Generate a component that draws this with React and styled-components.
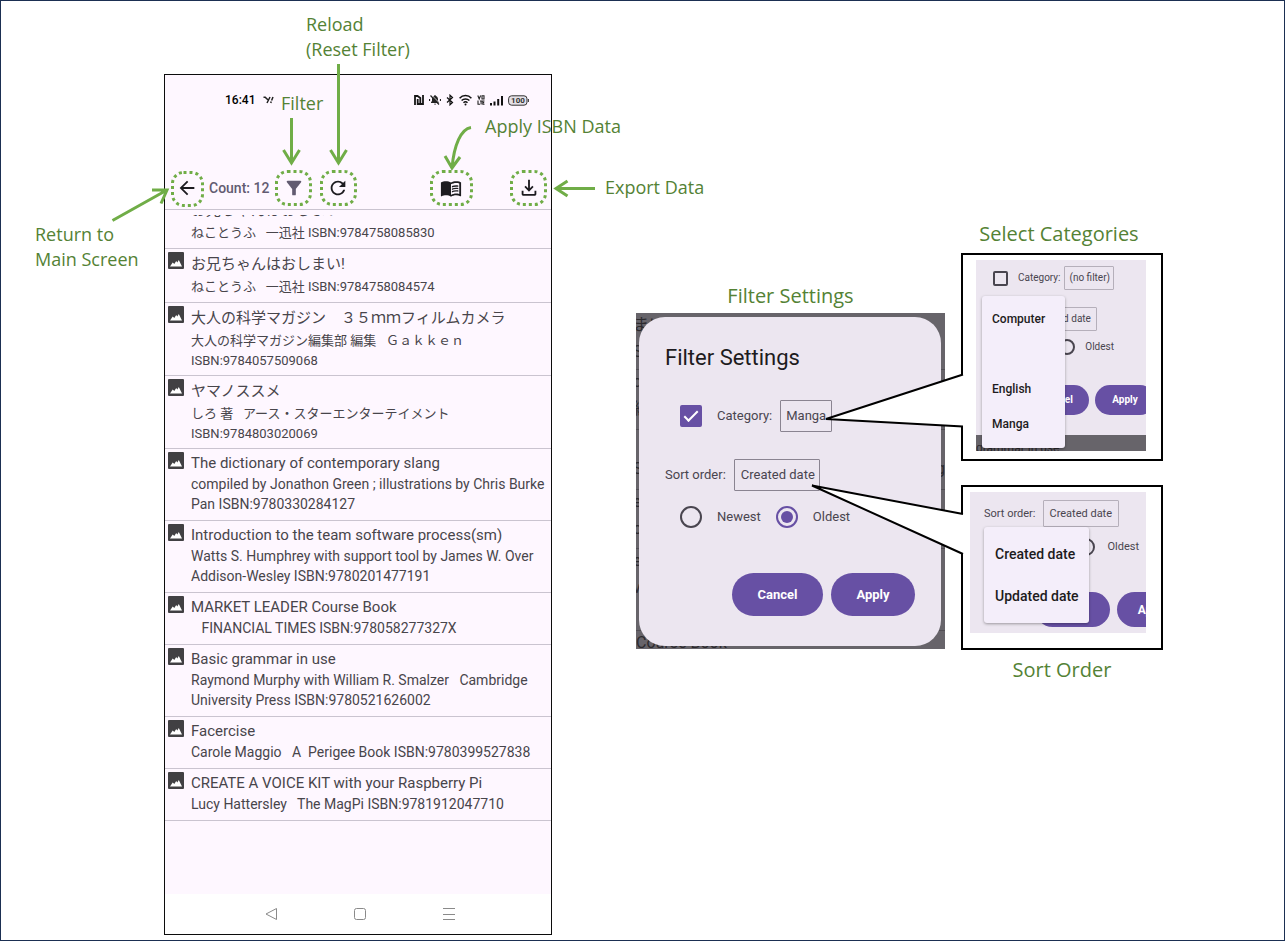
import React from "react";
import styled, { createGlobalStyle, css } from "styled-components";
import { MdArrowBack, MdFilterAlt, MdRefresh, MdMenuBook } from "react-icons/md";

const GlobalStyle = createGlobalStyle`
  *, *::before, *::after { box-sizing: border-box; }
  body { margin: 0; background: #fff; }
  button, input, select { font: inherit; margin: 0; }
  ul { list-style: none; margin: 0; padding: 0; }
`;

const sans = `Roboto, "Noto Sans CJK JP", sans-serif`;

const Page = styled.main`
  position: relative;
  display: flex;
  align-items: flex-start;
  min-height: 100vh;
  padding: 73px 0 5px 163px;
  border: 1px solid #1b2f52;
  font-family: ${sans};
`;

/* ---------- phone ---------- */

const Phone = styled.section`
  flex: none;
  display: flex;
  flex-direction: column;
  width: 388px;
  min-height: 861px;
  border: 1px solid #0c0c0c;
  background: #fef7ff;
`;

const StatusBar = styled.div`
  display: flex;
  align-items: center;
  height: 50px;
  padding: 0 22px 0 60px;
  gap: 8px;
  color: #111;
  svg { display: block; }
`;

const Clock = styled.span`
  font: 500 12px/16px Roboto, sans-serif;
  color: #000;
`;

const StatusIcons = styled.div`
  display: flex;
  align-items: center;
  gap: 5px;
  margin-left: auto;
`;

const Toolbar = styled.header`
  display: flex;
  align-items: center;
  height: 43px;
  margin-top: 42px;
  padding: 0 11px;
  border-bottom: 1px solid #cac4d0;
`;

const IconButton = styled.button`
  display: flex;
  width: 22px;
  height: 22px;
  margin-left: ${(p) => p.$gap || 0}px;
  padding: 0;
  border: 0;
  background: none;
  color: ${(p) => p.$color || "#1d1b20"};
  svg { width: 22px; height: 22px; }
`;

const Count = styled.span`
  width: 60px;
  margin-left: 11px;
  font-weight: 500;
  font-size: 14px;
  line-height: 20px;
  white-space: nowrap;
  color: #625b71;
`;

const Spacer = styled.div`
  flex: 1;
`;

const BookList = styled.ul`
  flex: 1;
  margin-top: 5px;
  overflow: hidden;
`;

const Book = styled.li`
  display: flex;
  padding: 3px 3px ${(p) => p.$bottom}px;
  border-bottom: 1px solid #cac4d0;
  color: #48454b;
  &:first-child { margin-top: -20px; }
  svg { flex: none; }
`;

const BookText = styled.div`
  margin-left: 7px;
`;

const BookTitle = styled.div`
  font-size: 15px;
  line-height: ${(p) => (p.$cjk ? 24 : 22)}px;
  white-space: nowrap;
`;

const BookInfo = styled.div`
  font-size: ${(p) => (p.$cjk ? 13 : 14)}px;
  line-height: 20px;
  white-space: pre;
  ${BookTitle} + & { margin-top: ${(p) => (p.$cjk ? 1 : 0)}px; }
`;

const NavBar = styled.nav`
  display: flex;
  align-items: center;
  justify-content: space-between;
  height: 40px;
  padding: 0 94px 0 98px;
  background: #fff;
`;

const NavButton = styled.button`
  display: flex;
  padding: 0;
  border: 0;
  background: none;
  color: #8a8a8a;
`;

/* ---------- figures ---------- */

const Column = styled.div`
  flex: none;
  margin: ${(p) => p.$top}px 0 0 ${(p) => p.$left}px;
`;

const Caption = styled.h2`
  margin: ${(p) => p.$top || 0}px 0 0;
  padding-right: ${(p) => p.$shift || 0}px;
  font: 400 20px/28px "Open Sans", sans-serif;
  text-align: center;
  color: #548235;
`;

const Backdrop = styled.div`
  position: relative;
  width: 309px;
  height: 336px;
  margin-top: 3px;
  padding: 4px 4px 3px 3px;
  overflow: hidden;
  background: #67646a;
`;

const DimList = styled.div`
  position: absolute;
  inset: 0;
  color: #2c2a2e;
`;

const DimRow = styled.div`
  height: ${(p) => p.$height}px;
  border-bottom: 1px solid #514e54;
  font-size: 16px;
  line-height: 24px;
  white-space: nowrap;
`;

const DimLine = styled.div`
  display: flex;
  justify-content: space-between;
  height: 27px;
  text-indent: -3px;
`;

const Dialog = styled.form`
  position: relative;
  display: flex;
  flex-direction: column;
  height: 329px;
  padding: 26px 26px 30px;
  border-radius: 26px;
  background: #ece6f0;
`;

const DialogTitle = styled.h3`
  margin: 0 0 27px;
  font-weight: 400;
  font-size: 22px;
  line-height: 30px;
  color: #1d1b20;
`;

const Field = styled.div`
  display: flex;
  align-items: center;
  gap: ${(p) => p.$gap ?? 8}px;
  margin-top: ${(p) => p.$top || 0}px;
  padding-left: ${(p) => p.$indent || 0}px;
  font-size: ${(p) => p.$size || 13}px;
  line-height: 20px;
  white-space: nowrap;
  color: #49454f;
  ${(p) => p.$end !== undefined && css`
    justify-content: flex-end;
    padding-right: ${p.$end}px;
  `}
`;

const Choice = styled.label`
  display: flex;
  align-items: center;
  gap: ${(p) => p.$gap || 15}px;
`;

const Check = styled.input.attrs({ type: "checkbox" })`
  appearance: none;
  display: grid;
  flex: none;
  width: ${(p) => p.$size || 22}px;
  height: ${(p) => p.$size || 22}px;
  border: 2px solid #49454f;
  border-radius: 2px;
  &:checked { border-color: #6750a4; background: #6750a4; }
  &:checked::after {
    content: "";
    width: 14px;
    height: 7px;
    margin: 4px 2px;
    border: solid #fff;
    border-width: 0 0 2px 2px;
    transform: rotate(-45deg);
  }
`;

const Radio = styled.input.attrs({ type: "radio" })`
  appearance: none;
  display: grid;
  place-items: center;
  flex: none;
  width: ${(p) => p.$size || 22}px;
  height: ${(p) => p.$size || 22}px;
  border: 2px solid #49454f;
  border-radius: 50%;
  &:checked { border-color: #6750a4; }
  &:checked::after {
    content: "";
    width: 12px;
    height: 12px;
    border-radius: 50%;
    background: #6750a4;
  }
`;

const Picker = styled.select`
  appearance: none;
  width: ${(p) => p.$width}px;
  height: ${(p) => p.$height || 32}px;
  padding: 0 0 0 ${(p) => p.$pad || 6}px;
  border: 1px solid ${(p) => p.$line || "#8a8491"};
  border-radius: 1px;
  background: none;
  color: #49454f;
`;

const Actions = styled.div`
  display: flex;
  justify-content: flex-end;
  gap: 8px;
  margin-top: auto;
`;

const Pill = styled.button`
  flex: none;
  width: ${(p) => p.$width}px;
  height: ${(p) => p.$height || 43}px;
  padding: 0;
  border: 0;
  border-radius: 22px;
  background: #6750a4;
  color: #fff;
  font-weight: 700;
  font-size: ${(p) => p.$size || 13}px;
`;

const Callout = styled.div`
  width: 202px;
  height: ${(p) => p.$height}px;
  margin-top: ${(p) => p.$top}px;
  padding: 5px 0 0 ${(p) => p.$left}px;
  border: 2px solid #000;
  background: #fff;
`;

const Snippet = styled.div`
  position: relative;
  width: ${(p) => p.$width}px;
  height: ${(p) => p.$height}px;
  overflow: hidden;
  background: #ece6f0;
`;

const SnippetFoot = styled.div`
  height: 16px;
  margin-top: 20px;
  background: #67646a;
  color: #2c2a2e;
  font-size: 12px;
  line-height: 26px;
  overflow: hidden;
`;

const Menu = styled.ul`
  position: absolute;
  left: ${(p) => p.$left}px;
  top: ${(p) => p.$top}px;
  width: ${(p) => p.$width}px;
  padding: 6px 0;
  border-radius: 3px;
  background: #f4eefa;
  box-shadow: 0 1px 3px rgba(0, 0, 0, 0.35);
`;

const MenuItem = styled.li`
  height: ${(p) => p.$height}px;
  padding-left: ${(p) => p.$indent}px;
  font-weight: 500;
  font-size: ${(p) => p.$size}px;
  line-height: ${(p) => p.$height}px;
  color: #1d1b20;
`;

/* ---------- annotations over the screens ---------- */

const Note = styled.div`
  position: absolute;
  left: ${(p) => p.$x}px;
  top: ${(p) => p.$y}px;
  font: 400 18px/25px "Open Sans", sans-serif;
  white-space: nowrap;
  color: #548235;
`;

const Overlay = styled.svg`
  position: absolute;
  left: 0;
  top: 0;
  pointer-events: none;
`;

const ImageIcon = () => (
  <svg width="16" height="17" viewBox="0 0 16 17" aria-hidden="true">
    <rect width="16" height="17" rx="1" fill="#414043" />
    <path d="M2 14.500L4.700 10.500L6.300 12L8.200 9L9.300 10.500L10.800 8L14 14.500Z" fill="#fff" />
  </svg>
);

const DownloadIcon = () => (
  <svg viewBox="0 -960 960 960" fill="currentColor" aria-hidden="true">
    <path d="M480-320 280-520l56-58 104 104v-366h80v366l104-104 56 58-200 200ZM240-140q-33 0-56.500-23.500T160-220v-140h80v140h480v-140h80v140q0 33-23.500 56.500T720-140H240Z" />
  </svg>
);

const books = [
  { title: "お兄ちゃんはおしまい!", info: ["ねことうふ   一迅社 ISBN:9784758085830"], cjk: true },
  { title: "お兄ちゃんはおしまい!", info: ["ねことうふ   一迅社 ISBN:9784758084574"], cjk: true },
  {
    title: "大人の科学マガジン　３５ｍｍフィルムカメラ",
    info: ["大人の科学マガジン編集部 編集   Ｇａｋｋｅｎ", "ISBN:9784057509068"],
    cjk: true,
  },
  {
    title: "ヤマノススメ",
    info: ["しろ 著   アース・スターエンターテイメント", "ISBN:9784803020069"],
    cjk: true,
  },
  {
    title: "The dictionary of contemporary slang",
    info: ["compiled by Jonathon Green ; illustrations by Chris Burke", "Pan ISBN:9780330284127"],
  },
  {
    title: "Introduction to the team software process(sm)",
    info: ["Watts S. Humphrey with support tool by James W. Over", "Addison-Wesley ISBN:9780201477191"],
  },
  { title: "MARKET LEADER Course Book", info: ["   FINANCIAL TIMES ISBN:978058277327X"] },
  {
    title: "Basic grammar in use",
    info: ["Raymond Murphy with William R. Smalzer   Cambridge", "University Press ISBN:9780521626002"],
  },
  { title: "Facercise", info: ["Carole Maggio   A  Perigee Book ISBN:9780399527838"] },
  { title: "CREATE A VOICE KIT with your Raspberry Pi", info: ["Lucy Hattersley   The MagPi ISBN:9781912047710"] },
];

const bottomSpace = (book) => {
  if (!book.cjk) return 6;
  return book.info.length > 1 ? 4 : 5;
};

const StatusGlyphs = () => (
  <StatusIcons aria-hidden="true">
    <svg width="10" height="10" viewBox="0 0 10 10" fill="none" stroke="#161616" strokeWidth="1.800">
      <path d="M1 10V1H3.500L6.300 3V8M3.700 4V9H9V0" />
    </svg>
    <svg width="12" height="12" viewBox="1 0 12 12">
      <path d="M3 9V8.300L4 7V5C4 3.300 5.200 2.200 6.400 2V1H7.600V2C9 2.300 10 3.400 10 5V7L11 8.300V9ZM6 9.800H8.200L7 11Z" fill="#222" />
      <path d="M3.500 1L12 9.500" stroke="#fef7ff" strokeWidth=".8" />
      <path d="M2.500 1.500L11 10.500M1.500 5V7M12.500 5V7" stroke="#222" strokeWidth="1.200" />
    </svg>
    <svg width="8" height="12" viewBox="0 0 8 12" fill="none" stroke="#111" strokeWidth="1.200">
      <path d="M1 3.500L6.500 8.500L4 10.800V1.200L6.500 3.500L1 8.500" />
    </svg>
    <svg width="13" height="12" viewBox="0 0 13 12" fill="none" stroke="#111" strokeWidth="1.500">
      <path d="M.6 4.200C3.800 .6 9.200 .6 12.400 4.200M2.600 6.600C4.800 4.300 8.200 4.300 10.400 6.600M4.500 8.700C5.700 7.600 7.300 7.600 8.500 8.700" />
      <circle cx="6.500" cy="10.500" r="1" fill="#111" stroke="none" />
    </svg>
    <svg width="8" height="10" viewBox="0 0 8 10" fill="none" stroke="#222" strokeWidth="1.100">
      <path d="M.8 .5L2.200 4L3.600 .5M5 .8H7V4H5ZM1 5.500V9.300H3M3 6H5.200M4.100 6V9.500M7.500 6H5.800V9.300H7.500M5.800 7.600H7.200" />
    </svg>
    <svg width="13" height="11" viewBox="0 0 13 11" fill="#111">
      <path d="M0 8H2V10.500H0ZM3.500 6.500H5.500V10.500H3.500ZM7.200 4H9.200V10.500H7.200ZM11 1H13V10.500H11Z" />
    </svg>
    <svg width="21" height="11" viewBox="0 0 21 11">
      <rect x=".6" y=".8" width="18.400" height="9.400" rx="3" fill="#e4e0e6" stroke="#333" />
      <path d="M20.400 4V7" stroke="#333" />
      <text x="10" y="8.200" fontFamily="Roboto, sans-serif" fontSize="8" fontWeight="700" textAnchor="middle" fill="#333">100</text>
    </svg>
  </StatusIcons>
);

const PhoneScreen = () => (
  <Phone>
    <StatusBar>
      <Clock>16:41</Clock>
      <svg width="11" height="8" viewBox="0 0 11 8" fill="none" stroke="#222" strokeWidth="1.500">
        <path d="M.5 1.200H2.200L4.800 3.800M7 1L4 7M10 1L8.600 4.500M8.200 5.500L7.800 7" />
      </svg>
      <StatusGlyphs />
    </StatusBar>
    <Toolbar>
      <IconButton aria-label="Back"><MdArrowBack /></IconButton>
      <Count>Count: 12</Count>
      <IconButton aria-label="Filter" $gap={14} $color="#625b71"><MdFilterAlt /></IconButton>
      <IconButton aria-label="Reload" $gap={22}><MdRefresh /></IconButton>
      <Spacer />
      <IconButton aria-label="Apply ISBN data"><MdMenuBook /></IconButton>
      <IconButton aria-label="Export data" $gap={56}><DownloadIcon /></IconButton>
    </Toolbar>
    <BookList>
      {books.map((book, i) => (
        <Book key={i} $bottom={bottomSpace(book)}>
          <ImageIcon />
          <BookText>
            <BookTitle $cjk={book.cjk}>{book.title}</BookTitle>
            {book.info.map((line) => <BookInfo key={line} $cjk={book.cjk}>{line}</BookInfo>)}
          </BookText>
        </Book>
      ))}
    </BookList>
    <NavBar>
      <NavButton aria-label="Back">
        <svg width="16" height="14" viewBox="0 0 16 14" fill="none" stroke="currentColor">
          <path d="M13.500 1.500V12.500L3 7Z" strokeLinejoin="round" />
        </svg>
      </NavButton>
      <NavButton aria-label="Home">
        <svg width="14" height="14" viewBox="0 0 14 14" fill="none" stroke="currentColor">
          <rect x="1.500" y="1.500" width="11" height="11" rx="2" />
        </svg>
      </NavButton>
      <NavButton aria-label="Menu">
        <svg width="16" height="14" viewBox="0 0 16 14" fill="none" stroke="currentColor">
          <path d="M2 1.500H14M2 7.500H14M2 12.500H14" />
        </svg>
      </NavButton>
    </NavBar>
  </Phone>
);

const FilterDialog = () => (
  <Backdrop>
    <DimList aria-hidden="true">
      <DimRow $height={57}><DimLine>まい</DimLine><DimLine>S</DimLine></DimRow>
      <DimRow $height={60}><DimLine>c</DimLine><DimLine>編</DimLine></DimRow>
      <DimRow $height={60}><DimLine /><DimLine><span>S</span><span>g</span></DimLine></DimRow>
      <DimRow $height={59}><DimLine>e</DimLine><DimLine>o</DimLine></DimRow>
      <DimRow $height={82}><DimLine>e</DimLine><DimLine>v</DimLine></DimRow>
      <DimRow $height={30}>Course Book</DimRow>
    </DimList>
    <Dialog onSubmit={(e) => e.preventDefault()}>
      <DialogTitle>Filter Settings</DialogTitle>
      <Field $indent={15}>
        <Choice><Check defaultChecked />Category:</Choice>
        <Picker $width={52} $pad={5} aria-label="Category"><option>Manga</option></Picker>
      </Field>
      <Field $top={27}>
        <label htmlFor="sort">Sort order:</label>
        <Picker id="sort" $width={86}><option>Created date</option></Picker>
      </Field>
      <Field $top={15} $indent={15} $gap={15}>
        <Choice><Radio name="order" />Newest</Choice>
        <Choice><Radio name="order" defaultChecked />Oldest</Choice>
      </Field>
      <Actions>
        <Pill type="button" $width={91}>Cancel</Pill>
        <Pill $width={84}>Apply</Pill>
      </Actions>
    </Dialog>
  </Backdrop>
);

const CategorySnippet = () => (
  <Snippet $width={170} $height={191}>
    <Field $top={6} $indent={17} $gap={4} $size={10}>
      <Choice $gap={10}><Check $size={15} />Category:</Choice>
      <Picker $width={50} $height={24} $pad={4} $line="#b5afba" aria-label="Category"><option>(no filter)</option></Picker>
    </Field>
    <Field $top={17} $end={49} $size={10}>
      <Picker $width={69} $height={24} $pad={5} $line="#b5afba" aria-label="Sort order"><option>Created date</option></Picker>
    </Field>
    <Field $top={6} $end={32} $size={10}>
      <Choice $gap={10}><Radio $size={16} name="categoryOrder" />Oldest</Choice>
    </Field>
    <Field $top={28} $indent={50} $gap={6}>
      <Pill $width={63} $height={30} $size={10}>Cancel</Pill>
      <Pill $width={60} $height={30} $size={10}>Apply</Pill>
    </Field>
    <SnippetFoot aria-hidden="true">grammar in use</SnippetFoot>
    <Menu $left={6} $top={36} $width={83} aria-label="Categories">
      {["Computer", "", "English", "Manga"].map((name) => (
        <MenuItem key={name} $height={35} $indent={10} $size={12}>{name}</MenuItem>
      ))}
    </Menu>
  </Snippet>
);

const SortSnippet = () => (
  <Snippet $width={176} $height={141}>
    <Field $top={8} $indent={14} $size={11}>
      <label htmlFor="sort-open">Sort order:</label>
      <Picker id="sort-open" $width={76} $height={27} $pad={5} $line="#b5afba"><option>Created date</option></Picker>
    </Field>
    <Field $top={10} $end={7} $size={11}>
      <Choice $gap={12}><Radio $size={18} name="sortOrder" />Oldest</Choice>
    </Field>
    <Field $top={35} $indent={65} $gap={7}>
      <Pill $width={75} $height={35} $size={12} aria-label="Cancel" />
      <Pill $width={72} $height={35} $size={12}>Apply</Pill>
    </Field>
    <Menu $left={14} $top={35} $width={105} aria-label="Sort order">
      {["Created date", "Updated date"].map((name) => (
        <MenuItem key={name} $height={42} $indent={11} $size={14}>{name}</MenuItem>
      ))}
    </Menu>
  </Snippet>
);

const outlines = [
  [172.5, 172.5, 30, 33],
  [276.5, 171.5, 34, 33],
  [321.5, 171.5, 34, 33],
  [431.5, 171.5, 40, 33],
  [511.5, 171.5, 34, 33],
];

const Annotations = () => (
  <>
    <Overlay width="1000" height="700" viewBox="1 1 1000 700" fill="none" aria-hidden="true">
      <path d="M963 374.500L826 419L963 426.500" fill="#fff" stroke="#000" strokeWidth="2" />
      <path d="M963 514L812 485.500L963 554" fill="#fff" stroke="#000" strokeWidth="2" />
      <g stroke="#70ad47" strokeWidth="3">
        {outlines.map(([x, y, w, h]) => (
          <rect key={x} x={x} y={y} width={w} height={h} rx="11" strokeDasharray="3 3" />
        ))}
        <path d="M291.500 118V163M283.500 150L291.500 163L299.500 150" />
        <path d="M338.500 64V163M330.500 150L338.500 163L346.500 150" />
        <path d="M471 127.500C461 129 454 145 452 168M445 156L452 168L460 157" />
        <path d="M595 188.500H556M567.500 181L556 188.500L567.500 196" />
        <path d="M112.500 220.500L167 190M152 190L167 190L161 203.500" />
      </g>
    </Overlay>
    <Note $x={305} $y={11}>Reload<br />(Reset Filter)</Note>
    <Note $x={280} $y={90}>Filter</Note>
    <Note $x={484} $y={113}>Apply ISBN Data</Note>
    <Note $x={604} $y={174}>Export Data</Note>
    <Note $x={34} $y={221}>Return to<br />Main Screen</Note>
  </>
);

export default function App() {
  return (
    <>
      <GlobalStyle />
      <Page>
        <PhoneScreen />
        <Column $top={208} $left={84}>
          <Caption>Filter Settings</Caption>
          <FilterDialog />
        </Column>
        <Column $top={146} $left={16}>
          <Caption $shift={6}>Select Categories</Caption>
          <Callout $top={5} $height={208} $left={13}><CategorySnippet /></Callout>
          <Callout $top={24} $height={165} $left={7}><SortSnippet /></Callout>
          <Caption $top={6}>Sort Order</Caption>
        </Column>
        <Annotations />
      </Page>
    </>
  );
}
